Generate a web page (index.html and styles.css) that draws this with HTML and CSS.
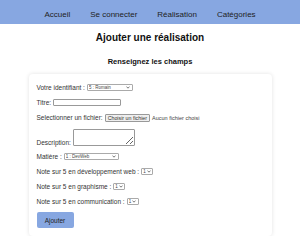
FILE: index.html
```html
<!DOCTYPE html>
<html lang="fr">
<head>
    <meta charset="UTF-8">
    <meta name="viewport" content="width=device-width, initial-scale=1.0">
    <title>Ajouter une réalisation</title>
    <link rel="stylesheet" href="styles.css">
</head>
<body>

    <!-- Navigation -->
    <nav class="nav">
        <ul class="nav-items">
            <li><a href="#">Accueil</a></li>
            <li><a href="#">Se connecter</a></li>
            <li><a href="#">Réalisation</a></li>
            <li><a href="#">Catégories</a></li>
        </ul>
    </nav>

    <h1 class="page-title">Ajouter une réalisation</h1>
    <h2 class="form-title">Renseignez les champs</h2>

    <!-- Formulaire -->
    <form class="card">
        <div class="row">
            <label>Votre identifiant :</label>
            <select class="sel sel-user">
                <option>5 : Romain</option>
            </select>
        </div>
        <div class="row">
            <label>Titre:</label>
            <input type="text" class="txt">
        </div>
        <div class="row">
            <label>Selectionner un fichier:</label>
            <input type="file" id="fichier" class="file-input">
            <label for="fichier" class="file-btn">Choisir un fichier</label>
            <span class="file-name">Aucun fichier choisi</span>
        </div>
        <div class="row row-area">
            <label>Description:</label>
            <textarea class="area"></textarea>
        </div>
        <div class="row">
            <label>Matière :</label>
            <select class="sel sel-matiere">
                <option>1 : DevWeb</option>
            </select>
        </div>
        <div class="row">
            <label>Note sur 5 en développement web :</label>
            <select class="sel"><option>1</option></select>
        </div>
        <div class="row">
            <label>Note sur 5 en graphisme :</label>
            <select class="sel"><option>1</option></select>
        </div>
        <div class="row">
            <label>Note sur 5 en communication :</label>
            <select class="sel"><option>1</option></select>
        </div>
        <button type="button" class="btn">Ajouter</button>
    </form>

</body>
</html>
```

FILE: styles.css
```css
/* Reset */
* {
    margin: 0;
    padding: 0;
    box-sizing: border-box;
}

body {
    font-family: 'Liberation Sans', Arial, sans-serif;
    color: #222;
    background: #fff;
}

/* Navigation bar */
.nav {
    background-color: #87a7e1;
    height: 24px;
    display: flex;
    align-items: center;
    justify-content: center;
}

.nav-items {
    list-style: none;
    display: flex;
    gap: 20px;
}

.nav-items a {
    color: #222;
    font-size: 8px;
    text-decoration: none;
}

/* Titles */
.page-title {
    text-align: center;
    font-size: 10px;
    margin-top: 8px;
    color: #111;
}

.form-title {
    text-align: center;
    font-size: 7.5px;
    margin-top: 14px;
    color: #111;
}

/* Form card */
.card {
    width: 243px;
    margin: 8px auto 0;
    padding: 6px 8px 8px;
    border-radius: 4px;
    box-shadow: 0 0 4px rgba(0, 0, 0, 0.12);
    display: flex;
    flex-direction: column;
    align-items: flex-start;
}

.row {
    display: flex;
    align-items: center;
    gap: 2px;
    height: 15px;
    font-size: 6.5px;
    color: #333;
}

.row-area {
    height: 24px;
    align-items: flex-end;
    padding-bottom: 3.5px;
}

/* Selects */
.sel {
    appearance: none;
    -webkit-appearance: none;
    font-family: inherit;
    font-size: 4.5px;
    width: 12px;
    height: 7px;
    padding: 0 0 0 1px;
    border: 1px solid #aaa;
    border-radius: 1px;
    color: #444;
    background: #fff url("data:image/svg+xml,%3Csvg xmlns='http://www.w3.org/2000/svg' width='4' height='3' viewBox='0 0 4 3'%3E%3Cpath d='M0.5 0.6L2 2.2L3.5 0.6' fill='none' stroke='%23444' stroke-width='0.7'/%3E%3C/svg%3E") no-repeat right 1.5px center / 4px 3px;
}

.sel-user {
    width: 46px;
}

.sel-matiere {
    width: 55px;
}

.txt {
    width: 68px;
    height: 7px;
    border: 1px solid #999;
    border-radius: 1px;
}

/* File chooser */
.file-input {
    display: none;
}

.file-btn {
    font-size: 5.3px;
    height: 8px;
    padding: 0 2px;
    display: flex;
    align-items: center;
    border: 1px solid #999;
    border-radius: 1px;
    background: #efefef;
    color: #333;
}

.file-name {
    font-size: 5.5px;
    color: #444;
}

.area {
    width: 62px;
    height: 17px;
    border: 1px solid #999;
    border-radius: 1px;
    resize: both;
}

/* Submit button */
.btn {
    margin-top: 3px;
    width: 37px;
    height: 16px;
    background-color: #87a7e1;
    color: #222;
    border: none;
    border-radius: 2px;
    font-size: 6.5px;
    font-family: inherit;
}
```
